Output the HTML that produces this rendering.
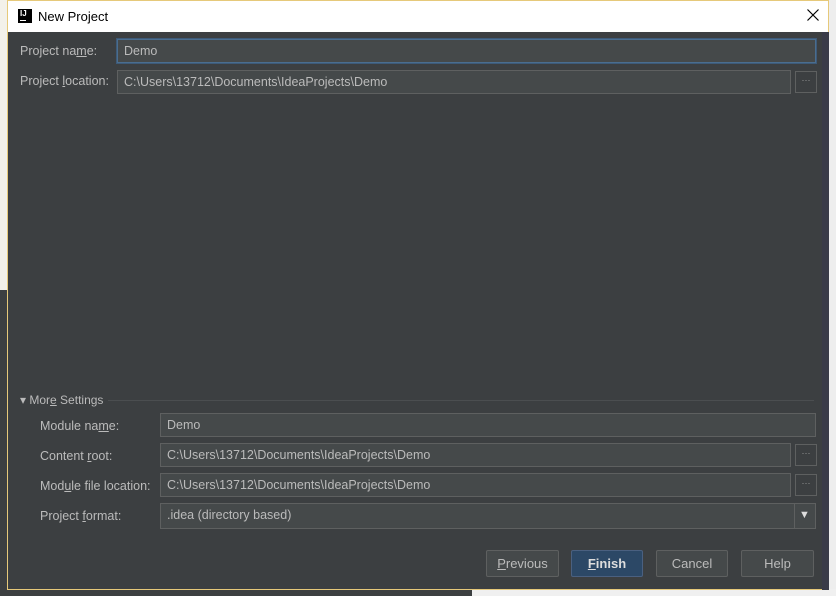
<!DOCTYPE html>
<html><head><style>
*{box-sizing:border-box;margin:0;padding:0}
body{width:836px;height:596px;overflow:hidden;background:#f0f0f0;font-family:"Liberation Sans",sans-serif;font-size:12.5px;position:relative}
.bgl{position:absolute;left:0;top:0;width:8px;height:596px;background:#f3f1ea}
.bgl2{position:absolute;left:0;top:290px;width:8px;height:306px;background:#3c3f41}
.bgr{position:absolute;left:829px;top:0;width:7px;height:596px;background:#eeeeee}
.bgb{position:absolute;left:0;top:589px;width:836px;height:7px;background:#f0f0f0}
.bgb2{position:absolute;left:0;top:589px;width:472px;height:7px;background:#3c3f41}
.dlg{position:absolute;left:7px;top:0;width:822px;height:590px;border:1px solid #e6c97a;background:#3c3f41}
.title{position:absolute;left:0;top:0;width:820px;height:31px;background:#fff;color:#000;font-size:13px}
.title .ic{position:absolute;left:10px;top:8px;width:14px;height:14px;background:#000;color:#fff;font-size:8px;font-weight:bold;line-height:10px;padding-left:2px}
.title .ic:after{content:"";position:absolute;left:2px;bottom:2px;width:6px;height:1px;background:#fff}
.title .t{position:absolute;left:30px;top:8px}
.title .x{position:absolute;left:799px;top:8px}
.rs{position:absolute;left:814px;top:31px;width:7px;height:558px;background:#3a3b48}
.lbl{position:absolute;color:#bbbbbb}
.f{position:absolute;height:24px;background:#45494a;border:1px solid #5e6060;color:#bbbbbb;padding:4px 0 0 6px;white-space:nowrap}
.dots{position:absolute;width:22px;height:22px;border:1px solid #5e6060;background:#3c3f41;color:#999;font-size:9px;text-align:center;line-height:16px}
.btn{position:absolute;top:550px;height:27px;border:1px solid #5e6060;background:#45494a;color:#bbbbbb;text-align:center;line-height:25px;border-radius:2px;font-size:13px}
</style></head><body>
<div class="bgl"></div><div class="bgl2"></div><div class="bgr"></div><div class="bgb"></div><div class="bgb2"></div>
<div class="dlg">
<div class="title"><div class="ic">IJ</div><div class="t">New Project</div>
<svg class="x" width="12" height="12" viewBox="0 0 12 12"><path d="M0.5 0.5L11.5 11.5M11.5 0.5L0.5 11.5" stroke="#000" stroke-width="1.2"/></svg></div>
<div class="rs"></div>
</div>
<div class="lbl" style="left:20px;top:44px">Project na<u>m</u>e:</div>
<div class="f" style="left:117px;top:39px;width:699px;border-color:#4a6d8f;box-shadow:0 0 0 1px #3d5a78">Demo</div>
<div class="lbl" style="left:20px;top:74px">Project <u>l</u>ocation:</div>
<div class="f" style="left:117px;top:70px;width:674px">C:\Users\13712\Documents\IdeaProjects\Demo</div>
<div class="dots" style="left:795px;top:71px">···</div>
<div class="lbl" style="left:20px;top:393px;font-size:12px">▾ Mor<u>e</u> Settings</div>
<div style="position:absolute;left:108px;top:400px;width:706px;height:1px;background:#4b4e50"></div>
<div class="lbl" style="left:40px;top:419px">Module na<u>m</u>e:</div>
<div class="f" style="left:160px;top:413px;width:656px">Demo</div>
<div class="lbl" style="left:40px;top:449px">Content <u>r</u>oot:</div>
<div class="f" style="left:160px;top:443px;width:631px">C:\Users\13712\Documents\IdeaProjects\Demo</div>
<div class="dots" style="left:795px;top:444px">···</div>
<div class="lbl" style="left:40px;top:479px">Mod<u>u</u>le file location:</div>
<div class="f" style="left:160px;top:473px;width:631px">C:\Users\13712\Documents\IdeaProjects\Demo</div>
<div class="dots" style="left:795px;top:474px">···</div>
<div class="lbl" style="left:40px;top:509px">Project <u>f</u>ormat:</div>
<div class="f" style="left:160px;top:503px;width:656px;height:26px">.idea (directory based)</div>
<div style="position:absolute;left:794px;top:504px;width:1px;height:24px;background:#5e6060"></div>
<div style="position:absolute;left:799px;top:509px;color:#ddd;font-size:11px">▼</div>
<div class="btn" style="left:486px;width:73px"><u>P</u>revious</div>
<div class="btn" style="left:571px;width:72px;background:#2c4866;border-color:#4a6080;color:#ddd;font-weight:bold"><u>F</u>inish</div>
<div class="btn" style="left:656px;width:72px">Cancel</div>
<div class="btn" style="left:741px;width:73px">Help</div>
</body></html>
